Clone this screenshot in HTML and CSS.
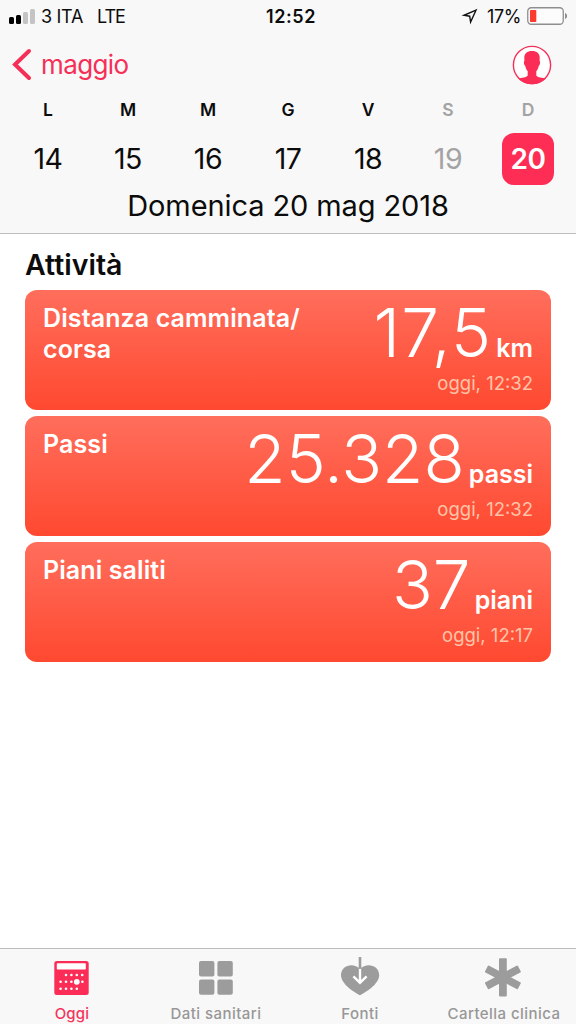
FILE: index.html
```html
<!DOCTYPE html>
<html lang="it">
<head>
  <meta charset="UTF-8">
  <meta name="viewport" content="width=device-width, initial-scale=1.0">
  <title>Salute</title>
  <link rel="stylesheet" href="styles.css">
</head>
<body>
  <div class="screen">
    <header class="header">
      <div class="status-bar">
        <div class="status-left">
          <svg class="signal" width="26" height="15" viewBox="0 0 26 15">
            <rect x="0" y="8" width="5" height="7" rx="1.5" fill="#000"/>
            <rect x="7" y="6" width="5" height="9" rx="1.5" fill="#000"/>
            <rect x="14" y="3" width="5" height="12" rx="1.5" fill="#c4c4c4"/>
            <rect x="21" y="0" width="5" height="15" rx="1.5" fill="#c4c4c4"/>
          </svg>
          <span class="carrier">3 ITA</span>
          <span class="network">LTE</span>
        </div>
        <div class="status-time">12:52</div>
        <div class="status-right">
          <svg class="location" width="15" height="15" viewBox="0 0 15 15">
            <path d="M13 1.2 L1 6.3 L6.7 7.2 L7.6 13 Z" fill="none" stroke="#111" stroke-width="1.4" stroke-linejoin="miter"/>
          </svg>
          <span class="percent">17%</span>
          <svg class="battery" width="41" height="18" viewBox="0 0 41 18">
            <rect x="0.75" y="0.75" width="35.5" height="16.5" rx="3.5" fill="#fcfcfc" stroke="#8e8e8e" stroke-width="1.3"/>
            <rect x="3" y="3" width="6.3" height="12" rx="0.8" fill="#fc3a30"/>
            <path d="M38 6 C40.8 7 40.8 11 38 12 Z" fill="#8e8e8e"/>
          </svg>
        </div>
      </div>

      <div class="nav-row">
        <a href="#" class="back">
          <svg width="20" height="32" viewBox="0 0 20 32">
            <path d="M18 2 L4 15.5 L18 29" fill="none" stroke="#f52f57" stroke-width="4" stroke-linecap="round" stroke-linejoin="miter"/>
          </svg>
          <span>maggio</span>
        </a>
        <a href="#" class="profile">
          <svg width="40" height="40" viewBox="0 0 40 40">
            <circle cx="20" cy="20" r="18.6" fill="#fff" stroke="#f52f57" stroke-width="1.4"/>
            <path d="M20 6.1 C24.8 6.1 27.8 8.6 27.7 13 L27.6 16 C28.5 16.5 28.2 20 26.8 20.8 C26.4 23.3 25.3 25.2 24.3 26.3 L24.3 30.4 C25.8 32.3 30.2 32.9 33.8 33.4 A19.2 19.2 0 0 1 6.2 33.4 C9.8 32.9 14.2 32.3 15.7 30.4 L15.7 26.3 C14.7 25.2 13.6 23.3 13.2 20.8 C11.8 20 11.5 16.5 12.4 16 L12.3 13 C12.2 8.6 15.2 6.1 20 6.1 Z" fill="#fb2d57"/>
          </svg>
        </a>
      </div>

      <div class="week">
        <div class="weekday">L</div>
        <div class="weekday">M</div>
        <div class="weekday">M</div>
        <div class="weekday">G</div>
        <div class="weekday">V</div>
        <div class="weekday muted">S</div>
        <div class="weekday muted">D</div>
        <div class="day">14</div>
        <div class="day">15</div>
        <div class="day">16</div>
        <div class="day">17</div>
        <div class="day">18</div>
        <div class="day muted">19</div>
        <div class="day selected">20</div>
      </div>

      <div class="full-date">Domenica 20 mag 2018</div>
    </header>

    <main class="content">
      <h1>Attività</h1>
      <div class="card">
        <div class="card-title">Distanza camminata/<br>corsa</div>
        <div class="card-data">
          <div class="reading"><span class="value distance">17,5</span><span class="unit">km</span></div>
          <div class="time">oggi, 12:32</div>
        </div>
      </div>
      <div class="card">
        <div class="card-title">Passi</div>
        <div class="card-data">
          <div class="reading"><span class="value">25.328</span><span class="unit">passi</span></div>
          <div class="time">oggi, 12:32</div>
        </div>
      </div>
      <div class="card">
        <div class="card-title">Piani saliti</div>
        <div class="card-data">
          <div class="reading"><span class="value">37</span><span class="unit">piani</span></div>
          <div class="time">oggi, 12:17</div>
        </div>
      </div>
    </main>

    <nav class="tab-bar">
      <a href="#" class="tab active">
        <svg width="40" height="40" viewBox="0 0 40 40">
          <rect x="2.3" y="3" width="34.4" height="34" rx="2.5" fill="#fb2d57"/>
          <rect x="4.8" y="5.2" width="29" height="6.4" rx="0.8" fill="#fff"/>
          <g fill="#fff">
            <circle cx="14" cy="17" r="1.3"/>
            <circle cx="19.4" cy="17" r="1.3"/>
            <circle cx="24.8" cy="17" r="1.3"/>
            <circle cx="30.2" cy="17" r="1.3"/>
            <circle cx="8.6" cy="23.8" r="1.3"/>
            <circle cx="14" cy="23.8" r="1.3"/>
            <circle cx="19.4" cy="23.8" r="1.3"/>
            <circle cx="24.8" cy="23.8" r="2.9"/>
            <circle cx="30.4" cy="23.8" r="1.3"/>
            <circle cx="8.6" cy="30.8" r="1.3"/>
            <circle cx="14" cy="30.8" r="1.3"/>
            <circle cx="19.4" cy="30.8" r="1.3"/>
            <circle cx="24.8" cy="30.8" r="1.3"/>
          </g>
        </svg>
        <span>Oggi</span>
      </a>
      <a href="#" class="tab">
        <svg width="40" height="40" viewBox="0 0 40 40" fill="#9c9c9c">
          <rect x="3" y="3" width="15.4" height="15.4" rx="2"/>
          <rect x="21.4" y="3" width="15.4" height="15.4" rx="2"/>
          <rect x="3" y="21.4" width="15.4" height="15.4" rx="2"/>
          <rect x="21.4" y="21.4" width="15.4" height="15.4" rx="2"/>
        </svg>
        <span>Dati sanitari</span>
      </a>
      <a href="#" class="tab">
        <svg width="40" height="40" viewBox="0 0 40 40">
          <path d="M20 37.2 C15 34.6 1 26.5 1 17 C1 7.5 13 3.8 20 10.8 C27 3.8 39.2 7.5 39.2 17 C39.2 26.5 25 34.6 20 37.2 Z" fill="#9c9c9c"/>
          <path d="M20 10.5 V24.5 M13.4 18.3 L20 24.9 L26.6 18.3" fill="none" stroke="#fff" stroke-width="2.4"/>
          <path d="M20 -1 V10.8" stroke="#9c9c9c" stroke-width="2.6"/>
        </svg>
        <span>Fonti</span>
      </a>
      <a href="#" class="tab">
        <svg width="40" height="40" viewBox="0 0 40 40" fill="#9c9c9c">
          <rect x="15" y="0.3" width="7.8" height="38.2" rx="1"/>
          <rect x="15" y="0.8" width="7.8" height="37.2" rx="1" transform="rotate(62 18.9 19.4)"/>
          <rect x="15" y="0.8" width="7.8" height="37.2" rx="1" transform="rotate(-62 18.9 19.4)"/>
        </svg>
        <span>Cartella clinica</span>
      </a>
    </nav>
  </div>
</body>
</html>
```
FILE: styles.css
```css
* {
  margin: 0;
  padding: 0;
  box-sizing: border-box;
}
body {
  font-family: Inter, "Liberation Sans", sans-serif;
  background: #fff;
  color: #0c0c0c;
}
a {
  text-decoration: none;
  color: inherit;
}
svg {
  display: block;
  overflow: visible;
}
.screen {
  height: 1024px;
  display: flex;
  flex-direction: column;
  overflow: hidden;
}
.header {
  height: 234px;
  background: #f8f8f8;
  border-bottom: 1px solid #bdbdbd;
}

/* status bar */
.status-bar {
  height: 32px;
  display: grid;
  grid-template-columns: 1fr auto 1fr;
  align-items: center;
  padding: 0 8px 0 9px;
  font-size: 18px;
}
.status-left,
.status-right {
  display: flex;
  align-items: center;
}
.status-right {
  justify-content: flex-end;
}
.carrier {
  margin-left: 6px;
  letter-spacing: -0.3px;
}
.network {
  margin-left: 14px;
  letter-spacing: -1.1px;
}
.status-time {
  font-weight: 600;
  padding-left: 5px;
  letter-spacing: 0.6px;
}
.percent {
  margin: 0 6px 0 9px;
  letter-spacing: -0.4px;
}

/* back link and profile */
.nav-row {
  height: 65px;
  display: flex;
  justify-content: space-between;
  align-items: center;
  padding: 0 24px 0 11px;
}
.back {
  display: flex;
  align-items: center;
  gap: 10px;
  font-size: 26px;
  color: #f52f57;
  letter-spacing: -0.6px;
}

/* week strip */
.week {
  display: grid;
  grid-template-columns: repeat(7, 1fr);
  grid-template-rows: 24px 52px;
  row-gap: 12px;
  justify-items: center;
  align-items: center;
  padding: 0 8px;
}
.weekday {
  font-size: 17.5px;
  font-weight: 600;
}
.day {
  width: 52px;
  line-height: 52px;
  text-align: center;
  font-size: 28.5px;
  letter-spacing: -0.5px;
}
.muted {
  color: #a3a3a3;
}
.day.selected {
  background: #fe2d55;
  color: #fff;
  border-radius: 12px;
  font-size: 28px;
  font-weight: 600;
}
.full-date {
  line-height: 42px;
  text-align: center;
  font-size: 29px;
  letter-spacing: -0.1px;
}

/* activity cards */
.content {
  flex: 1;
  padding: 12px 25px 0;
  display: flex;
  flex-direction: column;
  gap: 6px;
}
.content h1 {
  height: 38px;
  line-height: 38px;
  font-size: 28.5px;
  font-weight: 600;
}
.card {
  height: 120px;
  display: flex;
  justify-content: space-between;
  padding: 13px 18px 0 18px;
  border-radius: 12px;
  background: linear-gradient(#ff6e5c, #ff4930);
  color: #fff;
}
.card-title {
  font-size: 25px;
  font-weight: 600;
  line-height: 31px;
  letter-spacing: 0.1px;
}
.card-data {
  text-align: right;
  white-space: nowrap;
}
.reading {
  height: 66px;
  line-height: 59px;
}
.value {
  font-size: 67.5px;
  font-weight: 300;
}
.distance {
  letter-spacing: 1.2px;
}
.unit {
  margin-left: 4px;
  font-size: 25px;
  font-weight: 600;
}
.time {
  line-height: 29px;
  font-size: 18.5px;
  color: #ffc4a8;
}

/* tab bar */
.tab-bar {
  height: 76px;
  display: grid;
  grid-template-columns: repeat(4, 1fr);
  background: #f8f8f8;
  border-top: 1px solid #bdbdbd;
}
.tab {
  display: flex;
  flex-direction: column;
  align-items: center;
  padding-top: 9px;
  font-size: 15px;
  font-weight: 500;
  line-height: 20px;
  letter-spacing: 0.45px;
  color: #979797;
  white-space: nowrap;
}
.tab span {
  margin-top: 6px;
}
.tab.active {
  color: #f5365c;
  letter-spacing: 0.2px;
}
```
